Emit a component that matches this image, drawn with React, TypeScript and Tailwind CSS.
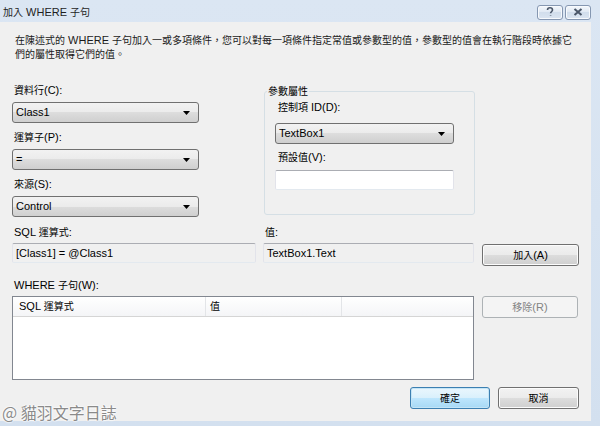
import React from "react";

const CJK = /([\u2e80-\u9fff\u3000-\u303f\uff00-\uffef]+)/;

function T({ s }: { s: string }) {
  return (
    <span>
      {s.split(CJK).map((p, i) =>
        i % 2 === 1 ? (
          <span key={i} className="text-[10px]">
            {p}
          </span>
        ) : (
          <React.Fragment key={i}>{p}</React.Fragment>
        )
      )}
    </span>
  );
}

function Label({ s, className = "" }: { s: string; className?: string }) {
  return (
    <div className={"h-[14px] leading-[14px] pl-[2px] whitespace-nowrap " + className}>
      <T s={s} />
    </div>
  );
}

function Combo({ value, className = "" }: { value: string; className?: string }) {
  return (
    <div
      className={
        "h-[21px] shrink-0 border border-[#707070] rounded-[3px] bg-[linear-gradient(#f2f2f2,#ebebeb_50%,#dddddd_50%,#cfcfcf)] flex items-center justify-between pl-[3px] pr-[8px] " +
        className
      }
    >
      <span className="leading-none">{value}</span>
      <svg width="7" height="4" viewBox="0 0 7 4">
        <path d="M0 0H7L3.5 4Z" fill="#000" />
      </svg>
    </div>
  );
}

function TextBox({ value = "", readOnly = false, className = "" }: { value?: string; readOnly?: boolean; className?: string }) {
  return (
    <div
      className={
        "h-[20px] shrink-0 border border-[#e2e3ea] border-t-[#abadb3] border-b-[#e3e9ef] rounded-[2px] flex items-center pl-[3px] " +
        (readOnly ? "bg-[#f0f0f0] " : "bg-white ") +
        className
      }
    >
      <span className="leading-none">{value}</span>
    </div>
  );
}

function Button({ label, disabled = false, def = false, className = "" }: { label: string; disabled?: boolean; def?: boolean; className?: string }) {
  const base = "h-[22px] shrink-0 rounded-[3px] border flex items-center justify-center leading-none ";
  const style = disabled
    ? "border-[#adb2b5] bg-[#f4f4f4] text-[#838383] "
    : def
    ? "border-[#3c7fb1] bg-[linear-gradient(#eaf6fd,#d9f0fc_50%,#bee6fd_50%,#a7d9f5)] shadow-[inset_0_0_0_1px_#c4e5f6] text-black "
    : "border-[#707070] bg-[linear-gradient(#f2f2f2,#ebebeb_50%,#dddddd_50%,#cfcfcf)] shadow-[inset_0_0_0_1px_#fcfcfc] text-black ";
  return (
    <div className={base + style + className}>
      <T s={label} />
    </div>
  );
}

function CaptionButton({ children }: { children: React.ReactNode }) {
  return (
    <div className="w-[26px] h-[15px] rounded-[3px] border border-[#8597b1] bg-[linear-gradient(#f4f8fc,#dfe8f3_50%,#d2deec_50%,#dbe5f1)] shadow-[inset_0_0_0_1px_#f7fafd] flex items-center justify-center">
      {children}
    </div>
  );
}

export default function App() {
  return (
    <div className="w-[600px] h-[426px] flex flex-col bg-[linear-gradient(#dbe6f3,#d3e0ef)] text-[11px] text-black font-['Liberation_Sans','Noto_Sans_CJK_TC',sans-serif] relative overflow-hidden">
      {/* Title bar */}
      <div className="h-[22px] flex items-center justify-between pl-[3px] pr-[9px] shrink-0">
        <div className="text-[#1e1e1e] h-[14px] leading-[14px] mt-[2px]">
          <T s="加入 WHERE 子句" />
        </div>
        <div className="flex gap-[2px] mt-[2px]">
          <CaptionButton>
            <svg width="8" height="10" viewBox="0 0 8 10">
              <path d="M1.5 3C1.5 1.5 2.6 0.8 4 0.8S6.5 1.6 6.5 3C6.5 4.4 4.6 4.6 4.6 6.3M4.6 8.2V8.8" stroke="#4a5668" strokeWidth="1.6" fill="none" />
            </svg>
          </CaptionButton>
          <CaptionButton>
            <svg width="10" height="8" viewBox="0 0 10 8">
              <path d="M1.5 1L8.5 7M8.5 1L1.5 7" stroke="#4a5668" strokeWidth="2" fill="none" />
            </svg>
          </CaptionButton>
        </div>
      </div>

      {/* Client */}
      <div className="flex-1 flex mr-[9px] mb-[5px]">
        <div className="flex-1 bg-[#f0f0f0] flex flex-col pl-[12px] pr-[12px]">
          {/* Description */}
          <div className="mt-[11px] pl-[3px] text-[#1a1a1a]">
            <div className="h-[14px] leading-[14px] whitespace-nowrap">
              <T s="在陳述式的 WHERE 子句加入一或多項條件，您可以對每一項條件指定常值或參數型的值，參數型的值會在執行階段時依據它" />
            </div>
            <div className="h-[14px] leading-[14px]">
              <T s="們的屬性取得它們的值。" />
            </div>
          </div>

          {/* Row 1 */}
          <div className="flex mt-[22px]">
            <div className="w-[187px] flex flex-col">
              <Label s="資料行(C):" />
              <Combo value="Class1" className="mt-[5px]" />
              <Label s="運算子(P):" className="mt-[7px]" />
              <Combo value="=" className="mt-[5px]" />
              <Label s="來源(S):" className="mt-[7px]" />
              <Combo value="Control" className="mt-[5px]" />
            </div>

            <div className="ml-[65px] mt-[8px] w-[211px] h-[124px] border border-[#d5dfe5] rounded-[3px] relative flex flex-col pl-[10px] pr-[20px]">
              <div className="absolute left-[2px] top-[-8px] bg-[#f0f0f0] px-[1px] h-[14px] leading-[14px]">
                <T s="參數屬性" />
              </div>
              <Label s="控制項 ID(D):" className="mt-[8px] pl-[3px]" />
              <Combo value="TextBox1" className="mt-[9px]" />
              <Label s="預設值(V):" className="mt-[6px] pl-[3px]" />
              <TextBox className="mt-[6px]" />
            </div>
          </div>

          {/* Row 2 */}
          <div className="flex items-start mt-[8px]">
            <div className="w-[244px] flex flex-col">
              <Label s="SQL 運算式:" />
              <TextBox readOnly value="[Class1] = @Class1" className="mt-[4px]" />
            </div>
            <div className="w-[211px] ml-[7px] flex flex-col">
              <Label s="值:" />
              <TextBox readOnly value="TextBox1.Text" className="mt-[4px]" />
            </div>
            <Button label="加入(A)" className="w-[97px] ml-[8px] mt-[19px]" />
          </div>

          {/* Row 3 */}
          <Label s="WHERE 子句(W):" className="mt-[12px]" />
          <div className="flex items-start mt-[4px]">
            <div className="w-[462px] h-[84px] border border-[#828790] bg-white flex flex-col">
              <div className="h-[20px] flex bg-[linear-gradient(#ffffff,#f4f5f7)] border-b border-[#d5d5d5]">
                <div className="w-[193px] flex items-center pl-[6px] border-r border-[#e3e5e8]">
                  <T s="SQL 運算式" />
                </div>
                <div className="w-[136px] flex items-center pl-[4px] border-r border-[#e3e5e8]">
                  <T s="值" />
                </div>
                <div className="flex-1" />
              </div>
            </div>
            <Button label="移除(R)" disabled className="w-[96px] ml-[8px]" />
          </div>

          {/* Row 4 */}
          <div className="flex justify-end gap-[8px] mt-[7px]">
            <Button label="確定" def className="w-[80px]" />
            <Button label="取消" className="w-[81px]" />
          </div>
        </div>
      </div>

      {/* Watermark */}
      <div className="absolute left-[2px] bottom-[5px] text-[16px] leading-[18px] text-[#8a8a8a] font-['Noto_Sans_CJK_TC',sans-serif] [text-shadow:0_0_2px_#fff,0_0_2px_#fff,0_0_2px_#fff]">
        @ 貓羽文字日誌
      </div>
    </div>
  );
}
